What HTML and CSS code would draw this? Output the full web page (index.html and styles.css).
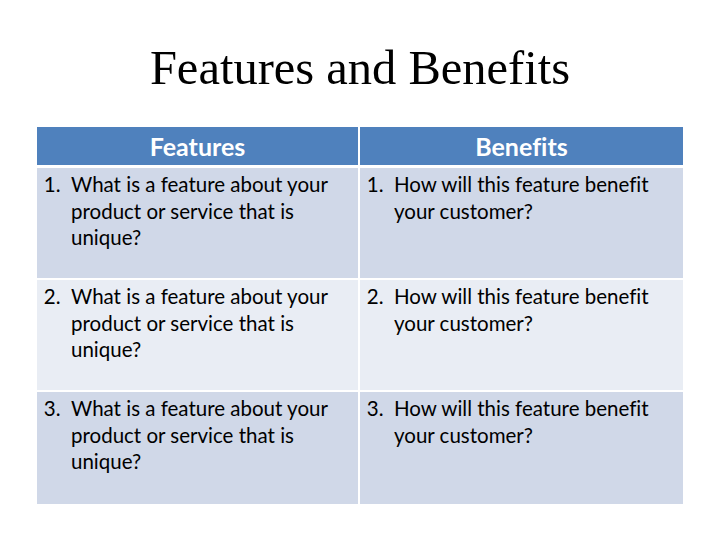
FILE: index.html
```html
<!DOCTYPE html>
<html>
<head>
<meta charset="utf-8">
<link rel="stylesheet" href="styles.css">
</head>
<body>
<div class="slide">
  <h1 class="title">Features and Benefits</h1>
  <div class="table">
    <div class="head">Features</div>
    <div class="head">Benefits</div>
    <div class="cell odd"><ol start="1"><li>What is a feature about your product or service that is unique?</li></ol></div>
    <div class="cell odd"><ol start="1"><li>How will this feature benefit your customer?</li></ol></div>
    <div class="cell even"><ol start="2"><li>What is a feature about your product or service that is unique?</li></ol></div>
    <div class="cell even"><ol start="2"><li>How will this feature benefit your customer?</li></ol></div>
    <div class="cell odd"><ol start="3"><li>What is a feature about your product or service that is unique?</li></ol></div>
    <div class="cell odd"><ol start="3"><li>How will this feature benefit your customer?</li></ol></div>
  </div>
</div>
</body>
</html>
```
FILE: styles.css
```css
html, body {
  margin: 0;
  padding: 0;
  background: #ffffff;
}
.slide {
  width: 720px;
  height: 540px;
  padding: 0 37px;
  box-sizing: border-box;
}
.title {
  margin: 0;
  height: 127px;
  padding-top: 39px;
  box-sizing: border-box;
  font-family: "Liberation Serif", serif;
  font-weight: normal;
  font-size: 48.5px;
  line-height: 58px;
  text-align: center;
  color: #000000;
}
.table {
  display: grid;
  grid-template-columns: 321px 323px;
  grid-template-rows: 39px 110px 110px 112px;
  column-gap: 2px;
  row-gap: 2px;
  background: #ffffff;
  font-family: Lato, "Liberation Sans", sans-serif;
  font-variant-ligatures: none;
}
.head {
  background: #4f81bd;
  color: #ffffff;
  font-weight: bold;
  font-size: 25px;
  line-height: 38px;
  text-align: center;
  margin-bottom: 1px;
}
.cell {
  color: #000000;
  font-size: 20.5px;
  line-height: 26.5px;
  padding: 3px 6px 0 5px;
}
.odd { background: #d0d8e8; }
.even { background: #e9edf4; }
.cell ol {
  margin: 0;
  padding-left: 29px;
}
.cell li::marker {
  content: counter(list-item) ".  ";
}
```
